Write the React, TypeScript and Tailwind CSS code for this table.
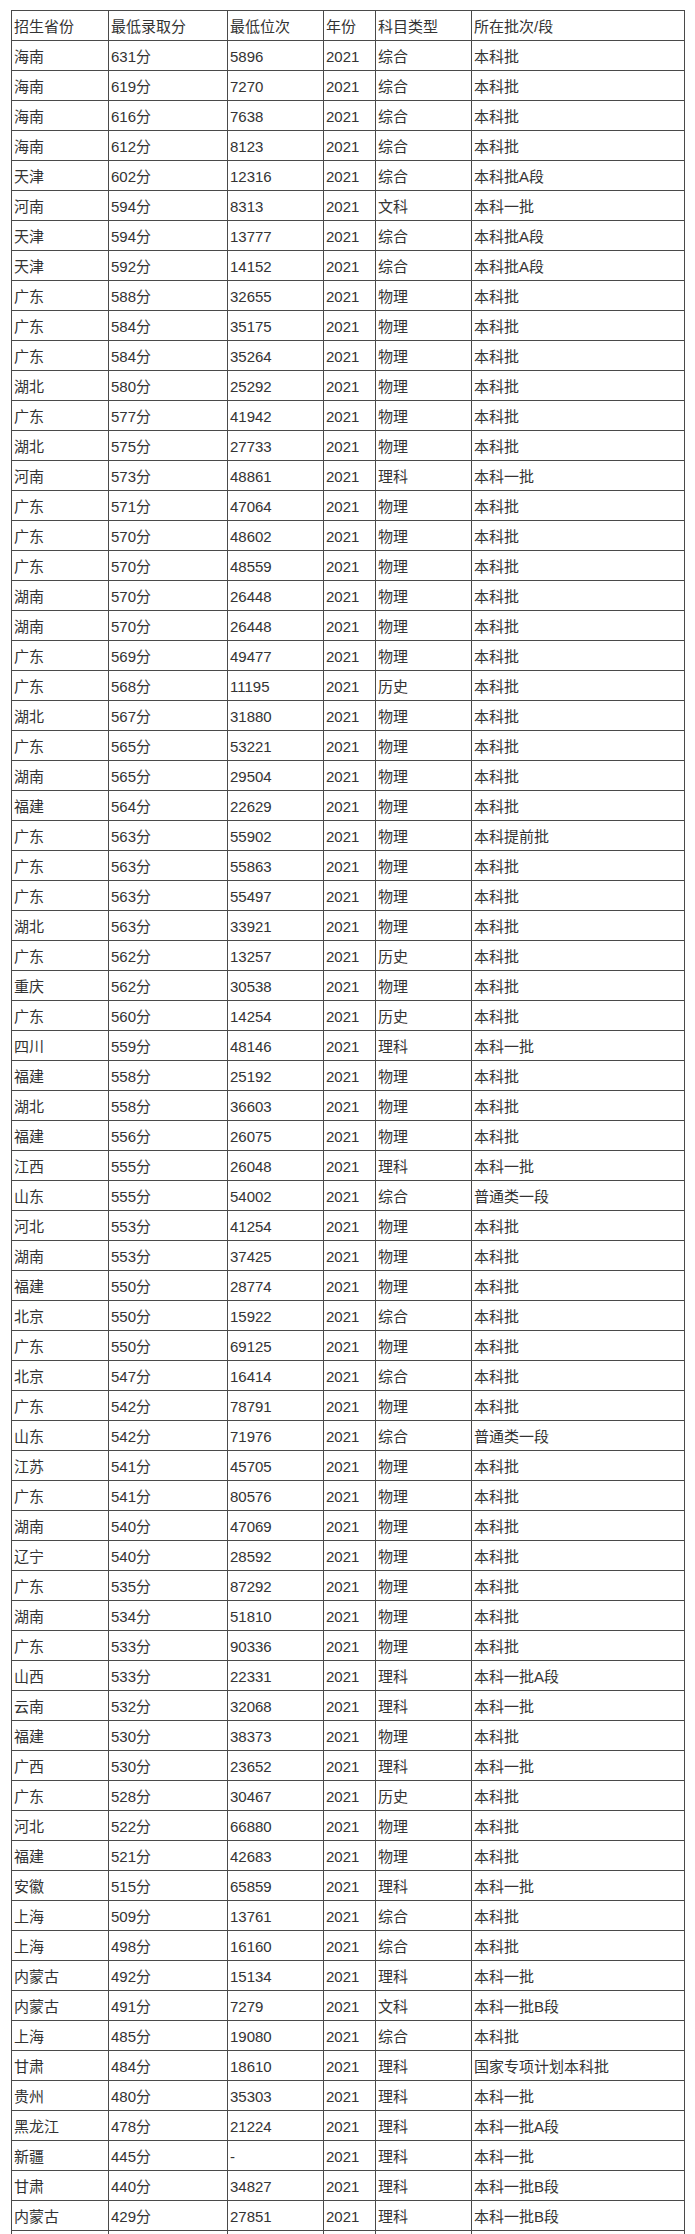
import React from "react";

const header = ["招生省份", "最低录取分", "最低位次", "年份", "科目类型", "所在批次/段"];

// [省份, 分数, 位次, 科目, 批次]
const rows: string[][] = [
  ["海南", "631", "5896", "综合", "本科批"],
  ["海南", "619", "7270", "综合", "本科批"],
  ["海南", "616", "7638", "综合", "本科批"],
  ["海南", "612", "8123", "综合", "本科批"],
  ["天津", "602", "12316", "综合", "本科批A段"],
  ["河南", "594", "8313", "文科", "本科一批"],
  ["天津", "594", "13777", "综合", "本科批A段"],
  ["天津", "592", "14152", "综合", "本科批A段"],
  ["广东", "588", "32655", "物理", "本科批"],
  ["广东", "584", "35175", "物理", "本科批"],
  ["广东", "584", "35264", "物理", "本科批"],
  ["湖北", "580", "25292", "物理", "本科批"],
  ["广东", "577", "41942", "物理", "本科批"],
  ["湖北", "575", "27733", "物理", "本科批"],
  ["河南", "573", "48861", "理科", "本科一批"],
  ["广东", "571", "47064", "物理", "本科批"],
  ["广东", "570", "48602", "物理", "本科批"],
  ["广东", "570", "48559", "物理", "本科批"],
  ["湖南", "570", "26448", "物理", "本科批"],
  ["湖南", "570", "26448", "物理", "本科批"],
  ["广东", "569", "49477", "物理", "本科批"],
  ["广东", "568", "11195", "历史", "本科批"],
  ["湖北", "567", "31880", "物理", "本科批"],
  ["广东", "565", "53221", "物理", "本科批"],
  ["湖南", "565", "29504", "物理", "本科批"],
  ["福建", "564", "22629", "物理", "本科批"],
  ["广东", "563", "55902", "物理", "本科提前批"],
  ["广东", "563", "55863", "物理", "本科批"],
  ["广东", "563", "55497", "物理", "本科批"],
  ["湖北", "563", "33921", "物理", "本科批"],
  ["广东", "562", "13257", "历史", "本科批"],
  ["重庆", "562", "30538", "物理", "本科批"],
  ["广东", "560", "14254", "历史", "本科批"],
  ["四川", "559", "48146", "理科", "本科一批"],
  ["福建", "558", "25192", "物理", "本科批"],
  ["湖北", "558", "36603", "物理", "本科批"],
  ["福建", "556", "26075", "物理", "本科批"],
  ["江西", "555", "26048", "理科", "本科一批"],
  ["山东", "555", "54002", "综合", "普通类一段"],
  ["河北", "553", "41254", "物理", "本科批"],
  ["湖南", "553", "37425", "物理", "本科批"],
  ["福建", "550", "28774", "物理", "本科批"],
  ["北京", "550", "15922", "综合", "本科批"],
  ["广东", "550", "69125", "物理", "本科批"],
  ["北京", "547", "16414", "综合", "本科批"],
  ["广东", "542", "78791", "物理", "本科批"],
  ["山东", "542", "71976", "综合", "普通类一段"],
  ["江苏", "541", "45705", "物理", "本科批"],
  ["广东", "541", "80576", "物理", "本科批"],
  ["湖南", "540", "47069", "物理", "本科批"],
  ["辽宁", "540", "28592", "物理", "本科批"],
  ["广东", "535", "87292", "物理", "本科批"],
  ["湖南", "534", "51810", "物理", "本科批"],
  ["广东", "533", "90336", "物理", "本科批"],
  ["山西", "533", "22331", "理科", "本科一批A段"],
  ["云南", "532", "32068", "理科", "本科一批"],
  ["福建", "530", "38373", "物理", "本科批"],
  ["广西", "530", "23652", "理科", "本科一批"],
  ["广东", "528", "30467", "历史", "本科批"],
  ["河北", "522", "66880", "物理", "本科批"],
  ["福建", "521", "42683", "物理", "本科批"],
  ["安徽", "515", "65859", "理科", "本科一批"],
  ["上海", "509", "13761", "综合", "本科批"],
  ["上海", "498", "16160", "综合", "本科批"],
  ["内蒙古", "492", "15134", "理科", "本科一批"],
  ["内蒙古", "491", "7279", "文科", "本科一批B段"],
  ["上海", "485", "19080", "综合", "本科批"],
  ["甘肃", "484", "18610", "理科", "国家专项计划本科批"],
  ["贵州", "480", "35303", "理科", "本科一批"],
  ["黑龙江", "478", "21224", "理科", "本科一批A段"],
  ["新疆", "445", "-", "理科", "本科一批"],
  ["甘肃", "440", "34827", "理科", "本科一批B段"],
  ["内蒙古", "429", "27851", "理科", "本科一批B段"],
];

const Row = ({ cells }: { cells: string[] }) => (
  <div className="grid grid-cols-[97px_119px_96px_52px_96px_213px] h-[30px]">
    {cells.map((text, i) => (
      <div
        key={i}
        className="h-[30px] border-r border-b border-[#4a4a4a] pl-[2px] pt-[1px] flex items-center whitespace-nowrap overflow-hidden"
      >
        {text}
      </div>
    ))}
  </div>
);

const App = () => {
  return (
    <div className="min-h-screen bg-white pt-[10px] pl-[11px]">
      <div
        className="w-[674px] border-l border-t border-[#4a4a4a] text-[15px] leading-none text-[#333]"
        style={{ fontFamily: '"Liberation Sans", "Noto Sans CJK SC", sans-serif' }}
      >
        <Row cells={header} />
        {rows.map((r, idx) => (
          <Row key={idx} cells={[r[0], r[1] + "分", r[2], "2021", r[3], r[4]]} />
        ))}
        <Row cells={["", "", "", "", "", ""]} />
      </div>
    </div>
  );
};

export default App;
